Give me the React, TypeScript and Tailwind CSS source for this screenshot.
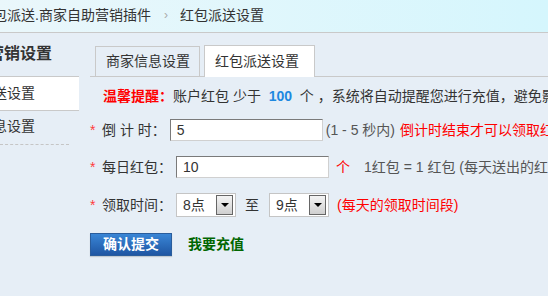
import { ReactNode } from 'react';

const font = { fontFamily: '"Liberation Sans", "Noto Sans CJK SC", sans-serif' };

function Label({ children }: { children: ReactNode }) {
  return (
    <span className="flex shrink-0 items-center">
      <span className="mr-[6px] w-[6px] text-[#ff3b3b]">*</span>
      <span>{children}</span>
    </span>
  );
}

function Select({ value }: { value: string }) {
  return (
    <div className="flex h-[24px] w-[60px] shrink-0 items-center justify-between border border-[#c5c5c5] bg-white pl-[6px] pr-[2px]">
      <span>{value}</span>
      <span className="flex h-[20px] w-[17px] items-center justify-center border border-[#666] bg-gradient-to-b from-[#f4f4f4] to-[#cfcfcf]">
        <span className="h-0 w-0 border-x-[4px] border-t-[4px] border-x-transparent border-t-black" />
      </span>
    </div>
  );
}

export default function App() {
  return (
    <div
      className="flex h-[296px] w-[548px] flex-col overflow-hidden bg-[#e6eef6] text-[14px] text-[#333]"
      style={font}
    >
      {/* Breadcrumb bar */}
      <div className="flex h-[33px] shrink-0 items-center whitespace-nowrap border-b border-[#c9c9c9] bg-gradient-to-r from-[#eaf7fb] to-[#d5f6fd] pb-[2px]">
        <span className="ml-[-21px] shrink-0 text-[#333]">红包派送.商家自助营销插件</span>
        <span className="ml-[13px] mr-[12px] shrink-0 text-[12px] text-[#aaa]">›</span>
        <span className="shrink-0 text-[#333]">红包派送设置</span>
      </div>

      <div className="flex flex-1">
        {/* Sidebar */}
        <div className="w-[79px] shrink-0 overflow-hidden whitespace-nowrap">
          <div className="flex h-[44px] items-center border-b border-[#c9c9c9] pb-[1px]">
            <span className="ml-[-12px] shrink-0 text-[16px] font-bold text-[#333]">营销设置</span>
          </div>
          <div className="flex h-[34px] items-center border-b border-[#c9c9c9] bg-white">
            <span className="ml-[-49px] shrink-0">红包派送设置</span>
          </div>
          <div className="flex h-[34px] w-[69px] items-center border-b border-dashed border-[#c5c5c5] pb-[2px]">
            <span className="ml-[-49px] shrink-0">商家信息设置</span>
          </div>
        </div>

        {/* Main */}
        <div className="flex-1 overflow-hidden whitespace-nowrap pl-[11px]">
          <div className="mt-[13px] flex h-[31px] items-end gap-[4px] border-b border-[#c9c9c9] pl-[5px]">
            <div className="flex h-[30px] w-[105px] shrink-0 items-center border border-b-0 border-[#c9c9c9] pl-[10px]">
              商家信息设置
            </div>
            <div className="mb-[-1px] flex h-[32px] w-[111px] shrink-0 items-center border border-b-0 border-[#c9c9c9] bg-white pl-[10px]">
              红包派送设置
            </div>
          </div>

          <div className="mt-[10px] flex h-[18px] items-center pl-[13px]">
            <span className="shrink-0 font-bold text-[#ff0000]">温馨提醒：</span>
            <span className="shrink-0">账户红包 少于&nbsp;&nbsp;</span>
            <span className="shrink-0 font-bold text-[#1e88e0]">100</span>
            <span className="shrink-0">&nbsp;&nbsp;个 ，系统将自动提醒您进行充值，避免影响活动正常进行。</span>
          </div>

          <div className="mt-[14px] flex h-[22px] items-center">
            <Label>倒 计 时：</Label>
            <div className="ml-[4px] flex h-[22px] w-[153px] shrink-0 items-center border border-b-[#d0d0d0] border-l-[#7a7a7a] border-r-[#d0d0d0] border-t-[#7a7a7a] bg-white pl-[6px]">
              5
            </div>
            <span className="ml-[3px] shrink-0 text-[#555]">(1 - 5 秒内)</span>
            <span className="ml-[5px] shrink-0 text-[#ff0000]">倒计时结束才可以领取红包</span>
          </div>

          <div className="mt-[15px] flex h-[22px] items-center">
            <Label>每日红包：</Label>
            <div className="ml-[4px] flex h-[22px] w-[153px] shrink-0 items-center border border-b-[#d0d0d0] border-l-[#7a7a7a] border-r-[#d0d0d0] border-t-[#7a7a7a] bg-white pl-[6px]">
              10
            </div>
            <span className="ml-[7px] shrink-0 text-[#ff0000]">个</span>
            <span className="ml-[14px] shrink-0 text-[#555]">1红包 = 1 红包 (每天送出的红包个数)</span>
          </div>

          <div className="mt-[15px] flex h-[24px] items-center">
            <Label>领取时间：</Label>
            <div className="ml-[4px] shrink-0">
              <Select value="8点" />
            </div>
            <span className="ml-[9px] mr-[10px] shrink-0">至</span>
            <Select value="9点" />
            <span className="ml-[8px] shrink-0 text-[#ff0000]">(每天的领取时间段)</span>
          </div>

          <div className="mt-[16px] flex items-center">
            <button className="flex h-[23px] w-[82px] shrink-0 items-center justify-center border border-[#2a5d9c] bg-gradient-to-b from-[#3a86d6] to-[#1f56a3] font-bold text-white shadow-[0_1px_1px_rgba(0,0,0,0.15)]">
              确认提交
            </button>
            <span className="ml-[16px] shrink-0 font-bold text-[#006600]">我要充值</span>
          </div>
        </div>
      </div>
    </div>
  );
}
